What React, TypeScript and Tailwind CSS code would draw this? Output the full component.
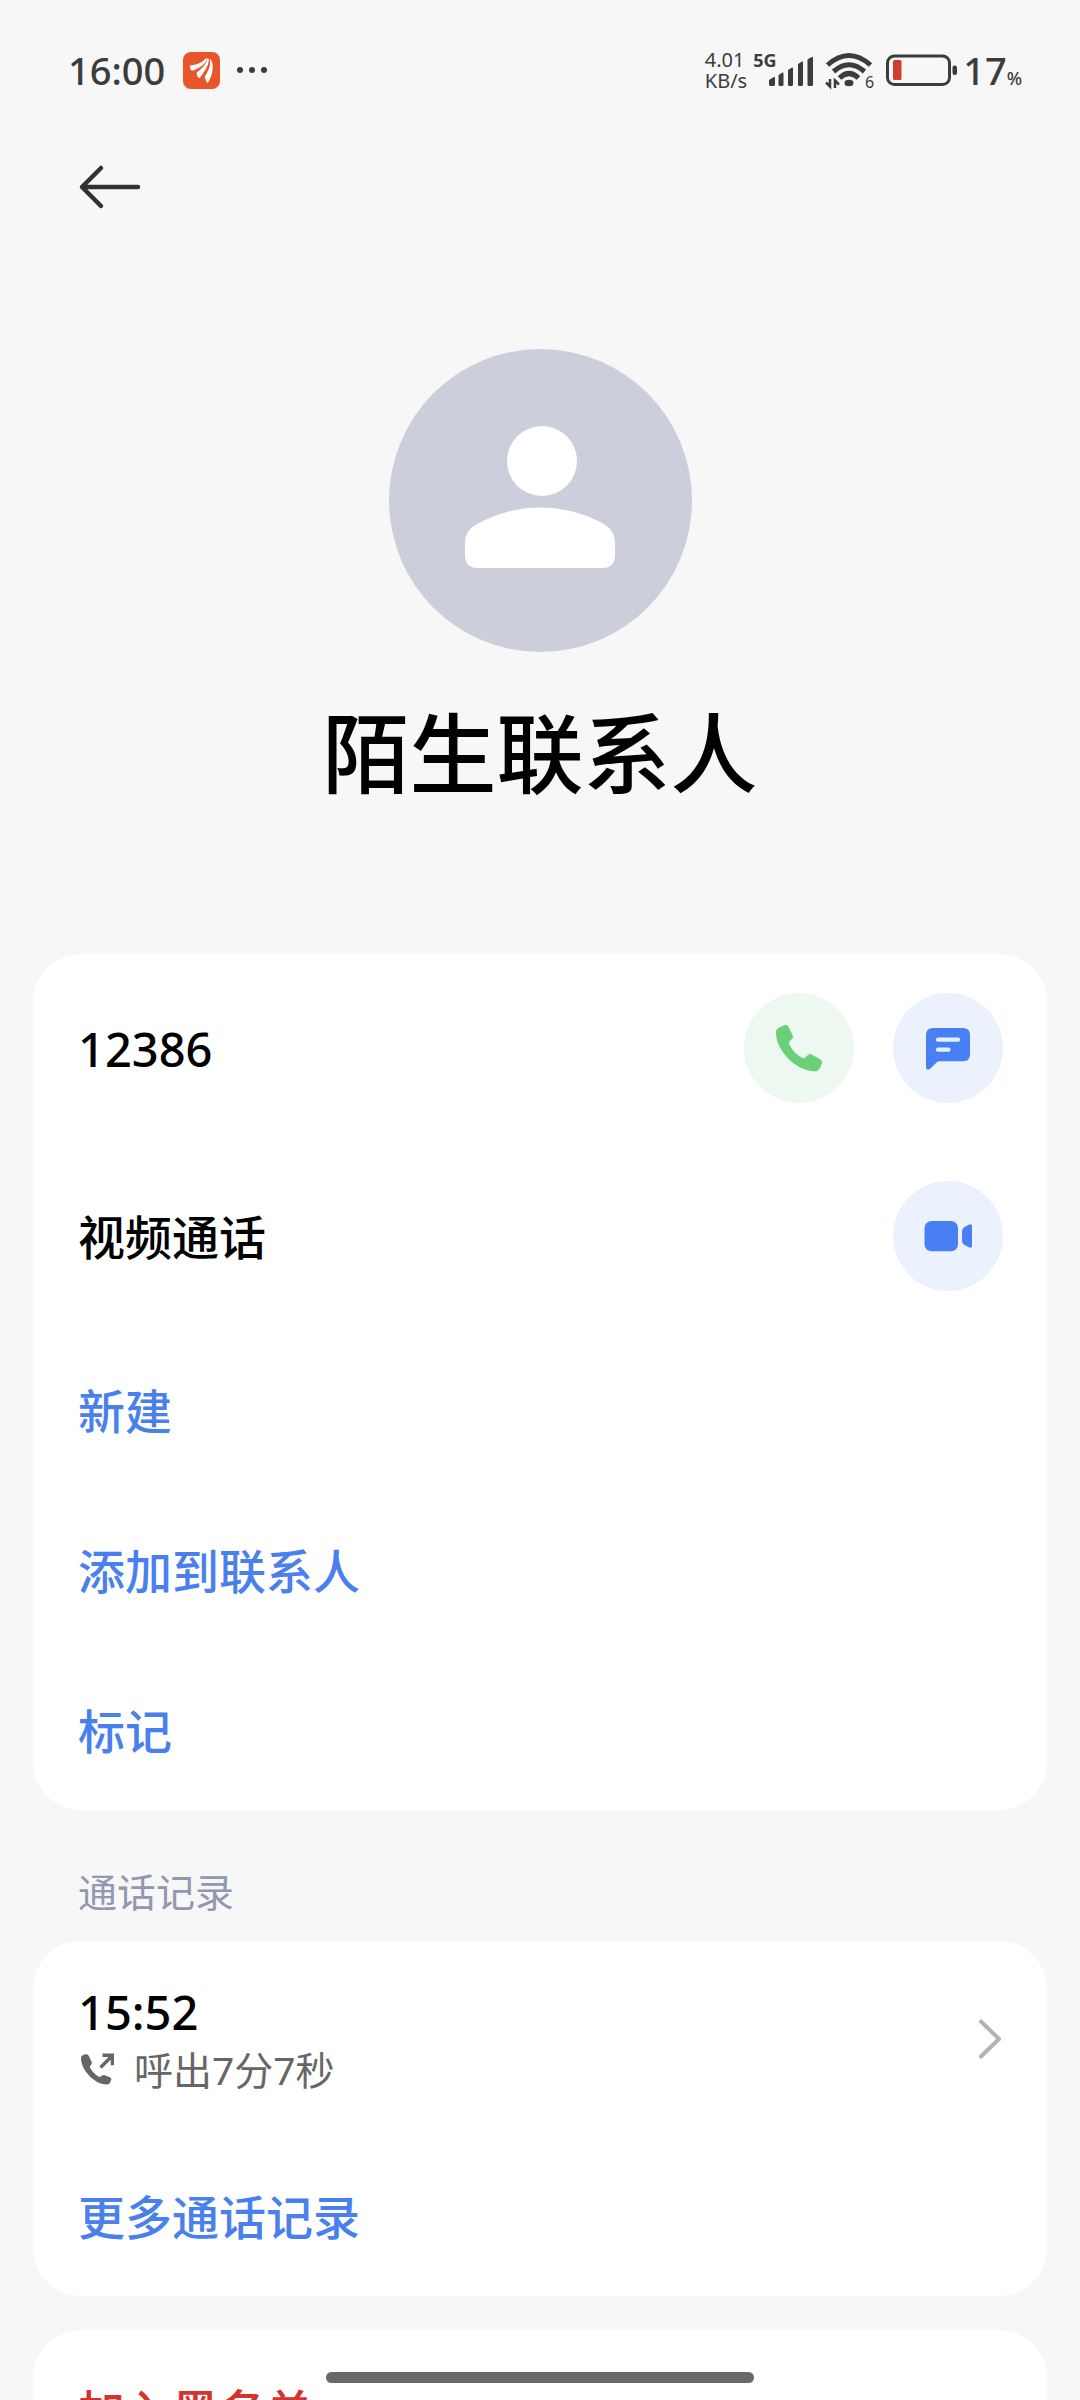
import type { ReactNode } from "react";

const FONT = "font-['Noto_Sans','Noto_Sans_CJK_SC',sans-serif]";

const CONTACT_ACTIONS = ["新建", "添加到联系人", "标记"];

function StatusBar() {
  return (
    <div className="flex h-[140px] shrink-0 items-center justify-between pl-[68px] pr-[58px] text-[#3c3c3c]">
      <div className="flex items-center">
        <span className="text-[38px] font-medium leading-none">16:00</span>
        <svg className="ml-[18px] h-[37px] w-[37px]" viewBox="0 0 37 37" aria-hidden="true">
          <rect width="37" height="37" rx="8" fill="#e8552b" />
          <g fill="#fff">
            <path d="M7 13.5C13 13 19 11 22.5 6.5C23.5 5.5 24 7 23.4 8.5C21 14 14.500 16.500 9.500 18.800C7.500 18.500 6.500 15.500 7 13.500Z" />
            <path d="M24.300 6.500C25.400 5.600 26.200 7 25.700 9.500C24.800 15 20.500 21 16.500 26.300C14.500 25.500 13.600 23 13.700 20.500C18 17 23 13.500 24.300 6.500Z" />
            <path d="M26.800 7C28.500 7.500 30 11.500 29.700 16C29.400 22 27.500 27 24.700 31C23 29.500 22 27 21.800 24.500C25.500 19 28 13.500 26.800 7Z" />
          </g>
        </svg>
        <svg className="ml-4 h-2 w-8" viewBox="0 0 32 8" fill="currentColor" aria-hidden="true">
          <circle cx="4" cy="4" r="3" />
          <circle cx="16" cy="4" r="3" />
          <circle cx="28" cy="4" r="3" />
        </svg>
      </div>

      <div className="flex items-center">
        <div className="text-[20px] leading-[21px]">
          <p>4.01</p>
          <p>KB/s</p>
        </div>
        <div className="relative ml-[6px] h-9 w-[61px]">
          <span className="absolute left-0 top-0 text-[18px] font-bold leading-4">5G</span>
          <svg className="h-full w-full" viewBox="0 0 61 36" fill="currentColor" aria-hidden="true">
            <path d="M16 28l5-3q1-.5 1 1v6.500q0 1.500-1.500 1.500h-3q-1.500 0-1.500-1.500z" />
            <path d="M25.500 23l4-2.500q1-.5 1 1v11q0 1.500-1.500 1.500h-2q-1.500 0-1.500-1.500z" />
            <path d="M35 18l4-2.500q1-.5 1 1v16q0 1.500-1.500 1.500h-2q-1.500 0-1.500-1.500z" />
            <path d="M45 12l4-2.500q1-.5 1 1v22q0 1.500-1.500 1.500h-2q-1.500 0-1.500-1.500z" />
            <path d="M54.500 7.500l4-2.500q1.500-.5 1.500 1v26.500q0 1.500-1.500 1.500h-2.500q-1.500 0-1.500-1.500z" />
          </svg>
        </div>
        <div className="relative ml-[10px] h-10 w-[50px]">
          <svg className="h-full w-full" viewBox="0 0 50 40" fill="none" stroke="currentColor" aria-hidden="true">
            <g strokeWidth="5">
              <path d="M3.500 15Q25-4 46.500 15" />
              <path d="M9.500 21.500Q25 8 40.500 21.500" />
              <path d="M15.500 28Q25 19 34.500 28" />
            </g>
            <ellipse cx="25" cy="33" rx="4.500" ry="3.200" fill="currentColor" stroke="none" />
            <path d="M6 29v7.500L2 32.500M11 38v-7.500L15 34.500" strokeWidth="2.500" />
          </svg>
          <span className="absolute bottom-0 right-0 text-[16px] leading-4">6</span>
        </div>
        <svg className="ml-3 h-8 w-[73px]" viewBox="0 0 73 32" fill="none" aria-hidden="true">
          <rect x="1.500" y="2" width="62" height="28.500" rx="7" stroke="currentColor" strokeWidth="3" />
          <rect x="7" y="6" width="8.500" height="20" rx="1.500" fill="#d33c31" />
          <rect x="66.500" y="11.500" width="4.500" height="9.500" rx="2" fill="currentColor" />
        </svg>
        <p className="ml-1 text-[38px] font-medium leading-none">
          17<span className="text-[18px]">%</span>
        </p>
      </div>
    </div>
  );
}

function RoundButton({ label, className, children }: { label: string; className: string; children: ReactNode }) {
  return (
    <button type="button" aria-label={label} className={`h-[110px] w-[110px] shrink-0 rounded-full ${className}`}>
      <svg className="h-full w-full" viewBox="0 0 110 110" fill="currentColor" aria-hidden="true">
        {children}
      </svg>
    </button>
  );
}

function ActionRow({ label, color = "text-[#4a80ee]" }: { label: string; color?: string }) {
  return (
    <button
      type="button"
      className={`flex h-40 w-full items-center px-[45px] pt-[3px] text-left text-[47px] font-medium leading-none ${color}`}
    >
      {label}
    </button>
  );
}

export default function App() {
  return (
    <div lang="zh-CN" className={`relative flex h-screen flex-col overflow-hidden bg-[#f7f7f7] text-black ${FONT}`}>
      <StatusBar />

      <header className="flex h-[94px] shrink-0 items-center pl-[78px]">
        <button type="button" aria-label="返回">
          <svg
            className="h-12 w-16"
            viewBox="0 0 64 48"
            fill="none"
            stroke="#303131"
            strokeWidth="4.500"
            strokeLinecap="round"
            strokeLinejoin="round"
            aria-hidden="true"
          >
            <path d="M23 5L4 24l19 19M4 24h56" />
          </svg>
        </button>
      </header>

      <main className="min-h-0 flex-1 overflow-y-auto px-[33px] [scrollbar-width:none]">
        {/* Avatar + name */}
        <div className="flex flex-col items-center pb-[141px] pt-[115px]">
          <svg className="h-[303px] w-[303px]" viewBox="0 0 303 303" aria-hidden="true">
            <circle cx="151.500" cy="151.500" r="151.500" fill="#cccedb" />
            <circle cx="153" cy="112" r="35" fill="#fff" />
            <path
              d="M76 194C76 186 80 179 88 175C128 153 175 153 215 175C222 179 226 186 226 194V206Q226 219 213 219H89Q76 219 76 206Z"
              fill="#fff"
            />
          </svg>
          <h1 className="mt-[41px] text-[87px] font-medium leading-[120px]">陌生联系人</h1>
        </div>

        {/* Number and contact actions */}
        <section className="rounded-[48px] bg-white">
          <div className="flex h-[188px] items-center justify-between pl-[45px] pr-11">
            <span className="pt-[3px] text-[47px] font-medium leading-none">12386</span>
            <div className="flex gap-[39px]">
              <RoundButton label="拨打电话" className="bg-[#ecf8f0] text-[#6bcf77]">
                <path d="M32 39C32 35 37 34 40 32.500C42 31.700 43.500 32 44.500 34L48.500 42C49.500 44 49 45 47.500 46.500L46 48C44.500 49.500 45 51 45.800 52.500C48.500 57.500 53 62 57.500 64.500C59 65.300 60.300 65.500 61.500 64.300L64 62C65.300 60.800 66.300 60.800 68 61.700L76.500 66.500C78.300 67.500 78.300 68.800 77.700 70.500C76.500 74 75 78 71.500 78.300C52 79 31 56 32 39Z" />
              </RoundButton>
              <RoundButton label="发送短信" className="bg-[#ebf2fe] text-[#487ff5]">
                <path d="M33 42q0-7 7-7h30q7 0 7 7v19.300q0 7-7 7H47q-2 0-3.500 1.200L37 76q-4 2-4-2z" />
                <path d="M45 46.700h20M45 56.700h10.500" stroke="#e3f1fe" strokeWidth="4.300" strokeLinecap="round" />
              </RoundButton>
            </div>
          </div>
          <div className="flex h-[188px] items-center justify-between pl-[45px] pr-11">
            <span className="pt-[3px] text-[47px] font-medium leading-none">视频通话</span>
            <RoundButton label="视频通话" className="bg-[#ebf2fe] text-[#487ff5]">
              <rect x="31.500" y="40" width="33.500" height="30.300" rx="7" />
              <path d="M69 50.500q0-3 2.500-4.500l5-2.500q2.500-1 2.500 1.500v20q0 2.500-2.500 1.500l-5-2.500q-2.500-1.500-2.500-4z" />
            </RoundButton>
          </div>
          {CONTACT_ACTIONS.map((label) => (
            <ActionRow key={label} label={label} />
          ))}
        </section>

        {/* Call history */}
        <h2 className="px-[45px] pb-[21px] pt-[54px] text-[39px] leading-[56px] text-[#9298b0]">通话记录</h2>
        <section className="rounded-[48px] bg-white">
          <button type="button" className="flex h-[195px] w-full items-center justify-between pl-[45px] pr-11 text-left">
            <span className="flex flex-col pt-[3px]">
              <span className="text-[47px] font-medium leading-[60px]">15:52</span>
              <span className="flex items-center gap-5 text-[39px] leading-[56px] text-[#666]">
                <svg className="h-9 w-9" viewBox="-2 0 36 36" aria-hidden="true">
                  <path
                    d="M1 6C1 3.500 4 2.300 6 2.300C7.800 2.100 8.500 3 9.200 4.800L11.500 9.500C12.300 11 11.800 12 10.800 13C9.500 14.300 9.800 15.500 10.800 17C12.800 20 15 22.500 18 24.300C19.500 25.200 20.500 25 21.500 24C22.700 22.800 23.700 22.800 25.300 23.500L29.500 25C31.300 25.800 31.700 26.800 31 28.500C30.300 31 29 32.600 26.500 32.600C14 32 1 18 1 6Z"
                    fill="#666"
                  />
                  <path d="M20.500 15.500L32.500 3.500M22.500 3.200h10v10" fill="none" stroke="#666" strokeWidth="3.500" />
                </svg>
                呼出7分7秒
              </span>
            </span>
            <svg
              className="h-11 w-7"
              viewBox="0 0 28 44"
              fill="none"
              stroke="#b3b3b3"
              strokeWidth="4"
              strokeLinecap="round"
              strokeLinejoin="round"
              aria-hidden="true"
            >
              <path d="M6 4.500L24 22L6 39.500" />
            </svg>
          </button>
          <ActionRow label="更多通话记录" />
        </section>

        <section className="mt-[34px] rounded-[48px] bg-white">
          <ActionRow label="加入黑名单" color="text-[#d4332f]" />
        </section>
      </main>

      {/* Gesture bar */}
      <div className="absolute bottom-[17px] left-1/2 h-[11px] w-[428px] -translate-x-1/2 rounded-full bg-[#696969]" />
    </div>
  );
}
